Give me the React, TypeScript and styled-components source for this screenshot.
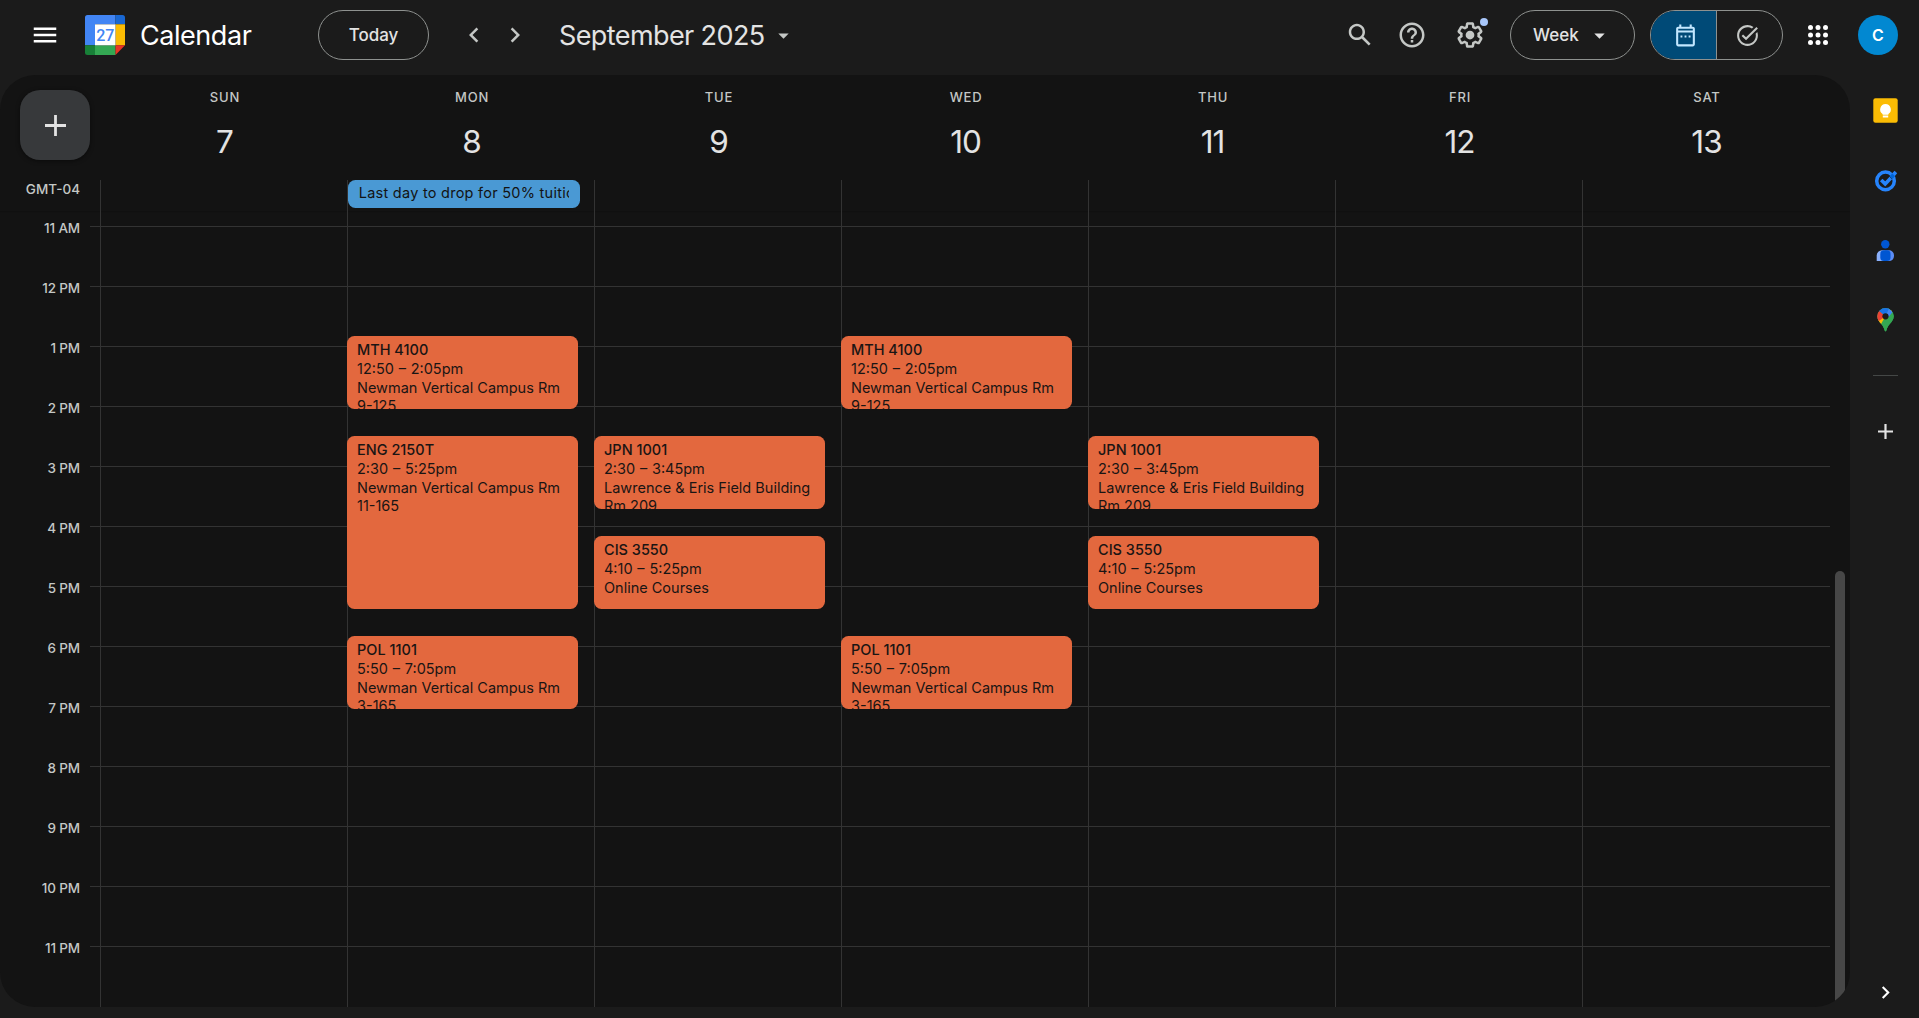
import React from 'react';
import styled, { createGlobalStyle, css } from 'styled-components';

const GlobalStyle = createGlobalStyle`
  *, *::before, *::after { box-sizing: border-box; }
  body {
    margin: 0;
    background: #1b1b1b;
    color: #e3e3e3;
    font-family: Inter, Roboto, "Liberation Sans", sans-serif;
    overflow: hidden;
  }
  button { font: inherit; color: inherit; background: none; border: 0; padding: 0; }
  svg { display: block; flex: none; }
`;

/* ---------- shell ---------- */

const Page = styled.div`
  display: flex;
  flex-direction: column;
  width: 100vw;
  height: 100vh;
  background: #1b1b1b;
`;

const Header = styled.header`
  display: flex;
  align-items: center;
  height: 70px;
  margin-bottom: 5px;
  padding: 0 21px 0 30px;
`;

const Main = styled.div`
  display: flex;
  flex: 1;
  min-height: 0;
  padding-bottom: 11px;
`;

/* ---------- header ---------- */

const IconButton = styled.button<{ $gap?: number }>`
  position: relative;
  display: flex;
  align-items: center;
  justify-content: center;
  width: 30px;
  height: 30px;
  margin-left: ${p => p.$gap ?? 0}px;
  color: #c4c7c5;
`;

const LogoSlot = styled.div`
  margin-left: 25px;
`;

const Brand = styled.span`
  width: 178px;
  margin-left: 15px;
  padding-top: 1px;
  font-size: 27px;
  line-height: 34px;
  letter-spacing: -0.45px;
  color: #fff;
`;

const Pill = styled.button<{ $width: number }>`
  display: flex;
  align-items: center;
  justify-content: center;
  width: ${p => p.$width}px;
  height: 50px;
  border: 1px solid #8e918f;
  border-radius: 25px;
  font-size: 17px;
  font-weight: 500;
  line-height: 24px;
`;

const ViewPill = styled(Pill)`
  margin-left: 25px;
  justify-content: flex-start;
  gap: 8px;
  padding-left: 22px;
`;

const MonthTitle = styled.h1`
  margin: 0 0 0 29px;
  padding-top: 1px;
  width: 212px;
  font-size: 27px;
  font-weight: 400;
  line-height: 34px;
  letter-spacing: -0.6px;
  white-space: nowrap;
`;

const Spacer = styled.div`
  flex: 1;
`;

const Badge = styled.span`
  position: absolute;
  top: -2px;
  right: -3px;
  width: 8px;
  height: 8px;
  border-radius: 50%;
  background: #a8c7fa;
`;

const Segmented = styled.div`
  display: flex;
  width: 133px;
  height: 50px;
  margin-left: 15px;
  border: 1px solid #8e918f;
  border-radius: 25px;
  overflow: hidden;
`;

const Segment = styled.button<{ $active?: boolean }>`
  display: flex;
  flex: 1;
  align-items: center;
  justify-content: center;
  padding-right: 5px;
  color: #c4c7c5;
  ${p =>
    p.$active &&
    css`
      flex: 0 0 66px;
      padding: 0 0 0 3px;
      border-right: 1px solid #8e918f;
      background: #004a77;
      color: #c2e7ff;
    `}
`;

const Avatar = styled.div`
  display: flex;
  align-items: center;
  justify-content: center;
  width: 40px;
  height: 40px;
  margin-left: 25px;
  border-radius: 50%;
  background: #0288d1;
  color: #fff;
  font-size: 16px;
  font-weight: 600;
`;

/* ---------- calendar panel ---------- */

const Panel = styled.main`
  display: flex;
  flex-direction: column;
  width: 1850px;
  border-radius: 35px;
  background: #131313;
  overflow: hidden;
`;

const DayHeader = styled.div`
  display: grid;
  grid-template-columns: 100px repeat(7, 247px);
  height: 105px;
`;

const CreateButton = styled.button`
  display: flex;
  align-items: center;
  justify-content: center;
  width: 70px;
  height: 70px;
  margin: 15px 0 0 20px;
  border-radius: 20px;
  background: #37393b;
  box-shadow: 0 1px 4px rgba(0, 0, 0, 0.5);
`;

const DayHead = styled.div`
  display: flex;
  flex-direction: column;
  align-items: center;
  padding: 12px 0 0 2px;
`;

const DayName = styled.span`
  padding-left: 1px;
  font-size: 13px;
  font-weight: 550;
  line-height: 20px;
  letter-spacing: 0.8px;
  color: #c4c7c5;
`;

const DayNumber = styled.span`
  margin-top: 14px;
  font-size: 31.5px;
  line-height: 41px;
  letter-spacing: -1px;
`;

const AllDayRow = styled.div`
  display: grid;
  grid-template-columns: 100px repeat(7, 247px);
  height: 31px;
  box-shadow: 0 1px 1px rgba(0, 0, 0, 0.15);
`;

const ZoneLabel = styled.span`
  width: 80px;
  font-size: 13.5px;
  font-weight: 550;
  line-height: 19px;
  text-align: right;
  color: #c4c7c5;
`;

const AllDayCell = styled.div`
  border-left: 1px solid #333;
`;

const AllDayEvent = styled.div`
  width: 232px;
  height: 28px;
  padding: 0 11px 0 10px;
  border-radius: 7.5px;
  background: #4a99d4;
  color: #131313;
  font-size: 14.5px;
  line-height: 26px;
  letter-spacing: 0.26px;
`;

const ClippedText = styled.div`
  padding-left: 0.7px;
  overflow: hidden;
  white-space: nowrap;
`;

const Body = styled.div`
  display: grid;
  grid-template: 100% / 1830px 20px;
  flex: 1;
  min-height: 0;
`;

const HourLayer = styled.div`
  grid-area: 1 / 1;
  display: flex;
  flex-direction: column;
  padding-top: 15px;
  overflow: hidden;
`;

const HourRow = styled.div`
  display: flex;
  flex: 0 0 60px;
  gap: 10px;
`;

const HourLabel = styled.span`
  width: 80px;
  height: 20px;
  margin-top: -8px;
  font-size: 13.5px;
  font-weight: 550;
  line-height: 20px;
  letter-spacing: -0.15px;
  text-align: right;
  color: #c4c7c5;
`;

const HourLine = styled.div`
  flex: 1;
  border-top: 1px solid #333;
`;

const DayLayer = styled.div`
  grid-area: 1 / 1;
  display: grid;
  grid-template: 100% / repeat(7, 247px);
  padding-left: 100px;
`;

/* One grid row per minute; the visible range starts at 10:45. */
const DayColumn = styled.div`
  display: grid;
  grid-auto-rows: 1px;
  align-content: start;
  border-left: 1px solid #333;
`;

const FIRST_MINUTE = 10 * 60 + 45;

const EventCard = styled.article<{ $start: number; $end: number }>`
  grid-row: ${p => p.$start - FIRST_MINUTE + 1} / span ${p => p.$end - p.$start - 2};
  width: 231px;
  margin-left: -1px;
  padding: 4px 4px 0 10px;
  border-radius: 7.5px;
  background: #e3683e;
  color: #1a1514;
  font-size: 14.5px;
  overflow: hidden;
`;

const EventTitle = styled.div`
  font-weight: 500;
  line-height: 19.4px;
`;

const EventTime = styled.div`
  line-height: 19.4px;
  word-spacing: 0.7px;
`;

const EventPlace = styled.div`
  line-height: 18px;
`;

const ScrollTrack = styled.div`
  grid-area: 1 / 2;
  padding: 360px 5px 0;
`;

const ScrollThumb = styled.div`
  height: 100%;
  border-radius: 5px 5px 0 0;
  background: #474747;
`;

/* ---------- side rail ---------- */

const Rail = styled.aside`
  display: flex;
  flex: 1;
  flex-direction: column;
  align-items: center;
  padding: 20px 0 2px 2px;
`;

const RailItem = styled.button`
  display: flex;
  align-items: center;
  justify-content: center;
  width: 50px;
  height: 30px;
  margin-bottom: 40px;
`;

const RailDivider = styled.div`
  width: 25px;
  height: 1px;
  margin: 0 0 40px;
  background: #444746;
`;

const RailCollapse = styled.button`
  margin-top: auto;
`;

/* ---------- icons ---------- */

type GlyphProps = { d: string; size?: number; color?: string };

const Glyph = ({ d, size = 30, color = 'currentColor' }: GlyphProps) => (
  <svg width={size} height={size} viewBox="0 0 24 24" fill={color} aria-hidden>
    <path d={d} />
  </svg>
);

const paths = {
  menu: 'M3 18h18v-2H3v2zm0-5h18v-2H3v2zm0-7v2h18V6H3z',
  prev: 'M15.41 7.41 14 6l-6 6 6 6 1.41-1.41L10.83 12z',
  next: 'M10 6 8.59 7.41 13.17 12l-4.58 4.59L10 18l6-6z',
  drop: 'M7 10l5 5 5-5z',
  search:
    'M20.49 19l-5.73-5.73C15.53 12.2 16 10.91 16 9.5 16 5.91 13.09 3 9.5 3S3 5.91 3 9.5 5.91 16 9.5 16c1.41 0 2.7-.47 3.77-1.24L19 20.49 20.49 19zM5 9.5C5 7.01 7.01 5 9.5 5S14 7.01 14 9.5 11.99 14 9.5 14 5 11.99 5 9.5z',
  help:
    'M11 18h2v-2h-2v2zm1-16C6.48 2 2 6.48 2 12s4.48 10 10 10 10-4.48 10-10S17.52 2 12 2zm0 18c-4.41 0-8-3.59-8-8s3.59-8 8-8 8 3.59 8 8-3.59 8-8 8zm0-14c-2.21 0-4 1.79-4 4h2c0-1.1.9-2 2-2s2 .9 2 2c0 2-3 1.75-3 5h2c0-2.25 3-2.5 3-5 0-2.21-1.79-4-4-4z',
  gear:
    'M13.85 22.25h-3.7c-.74 0-1.36-.54-1.45-1.27l-.27-1.89c-.27-.14-.53-.29-.79-.46l-1.8.72c-.7.26-1.47-.03-1.81-.65L2.2 15.53c-.35-.66-.2-1.44.36-1.88l1.53-1.19c-.01-.15-.02-.3-.02-.46 0-.15.01-.31.02-.46l-1.52-1.19c-.59-.45-.74-1.26-.37-1.88l1.85-3.19c.34-.62 1.11-.9 1.79-.63l1.81.73c.26-.17.52-.32.78-.46l.27-1.91c.09-.7.71-1.25 1.44-1.25h3.7c.74 0 1.36.54 1.45 1.27l.27 1.89c.27.14.53.29.79.46l1.8-.72c.71-.26 1.48.03 1.82.65l1.84 3.18c.36.66.2 1.44-.36 1.88l-1.52 1.19c.01.15.02.3.02.46s-.01.31-.02.46l1.52 1.19c.56.45.72 1.23.37 1.86l-1.86 3.22c-.34.62-1.11.9-1.8.63l-1.8-.72c-.26.17-.52.32-.78.46l-.27 1.91c-.1.68-.72 1.22-1.46 1.22zm-3.23-2h2.76l.37-2.55.53-.22c.44-.18.88-.44 1.34-.78l.45-.34 2.38.96 1.38-2.4-2.03-1.58.07-.56c.03-.26.06-.51.06-.78s-.03-.53-.06-.78l-.07-.56 2.03-1.58-1.39-2.4-2.39.96-.45-.35c-.42-.32-.87-.58-1.33-.77l-.52-.22-.37-2.55h-2.76l-.37 2.55-.53.21c-.44.19-.88.44-1.34.79l-.45.33-2.38-.95-1.39 2.39 2.03 1.58-.07.56a7 7 0 0 0-.06.79c0 .26.02.53.06.78l.07.56-2.03 1.58 1.38 2.4 2.39-.96.45.35c.43.33.86.58 1.33.77l.53.22.38 2.55zM12 15.5a3.5 3.5 0 1 0 0-7 3.5 3.5 0 0 0 0 7z',
  taskAlt:
    'M22 5.18 10.59 16.6l-4.24-4.24 1.41-1.41 2.83 2.83 10-10L22 5.18zm-2.21 5.04c.13.57.21 1.17.21 1.78 0 4.42-3.58 8-8 8s-8-3.58-8-8 3.58-8 8-8c1.58 0 3.04.46 4.28 1.25l1.44-1.44A9.9 9.9 0 0 0 12 2C6.48 2 2 6.48 2 12s4.48 10 10 10 10-4.48 10-10c0-1.19-.22-2.33-.6-3.39l-1.61 1.61z',
};

const CalendarLogo = () => (
  <svg width="40" height="40" viewBox="0 0 40 40" role="img" aria-label="Calendar">
    <path d="M2.5 0H30.5V9.3H10V30.3H0V2.5A2.5 2.5 0 0 1 2.5 0z" fill="#4285f4" />
    <path d="M30.5 0h7A2.5 2.5 0 0 1 40 2.5v6.8h-9.5z" fill="#1967d2" />
    <path d="M30.5 9.3H40v21h-9.5z" fill="#fbbc04" />
    <path d="M10 30.3h20.5V40H10z" fill="#34a853" />
    <path d="M0 30.3h10V40H2.5A2.5 2.5 0 0 1 0 37.5z" fill="#188038" />
    <path d="M30.5 30.3H40L30.5 40z" fill="#ea3325" />
    <path d="M10 9.3h20.5v21H10z" fill="#fff" />
    <text x="20.3" y="25.9" textAnchor="middle" fontFamily="Roboto" fontSize="16" fontWeight="500" fill="#4285f4">
      27
    </text>
  </svg>
);

const CalendarGlyph = () => (
  <svg width="25" height="25" viewBox="0 0 24 24" aria-hidden>
    <path
      fill="currentColor"
      fillRule="evenodd"
      d="M6 1.5h2v2h8v-2h2v2h1c1.1 0 2 .9 2 2v15c0 1.1-.9 2-2 2H5c-1.1 0-2-.9-2-2v-15c0-1.1.9-2 2-2h1v-2zM5 5.5v1.6h14V5.5H5zm0 3.6v11.4h14V9.1H5z"
    />
    <path fill="currentColor" d="M7.2 12h1.8v1.8H7.2zM11.1 12h1.8v1.8h-1.8zM15 12h1.8v1.8H15z" />
  </svg>
);

const AppsGlyph = () => (
  <svg width="30" height="30" viewBox="0 0 24 24" fill="#fff" aria-hidden>
    {[6, 12, 18].map(y => [6, 12, 18].map(x => <circle key={`${x}-${y}`} cx={x} cy={y} r="2" />))}
  </svg>
);

const PlusGlyph = ({ size, stroke }: { size: number; stroke: number }) => (
  <svg width={size} height={size} viewBox={`0 0 ${size} ${size}`} stroke="currentColor" strokeWidth={stroke} aria-hidden>
    <path d={`M${size / 2} 0V${size}M0 ${size / 2}H${size}`} />
  </svg>
);

const KeepIcon = () => (
  <svg width="25" height="25" viewBox="0 0 25 25" aria-hidden>
    <rect x=".3" y=".3" width="24.4" height="24.4" rx="2.2" fill="#fbbc04" />
    <path
      d="M12.5 6a5.4 5.4 0 0 0-2.9 9.9v.9h5.8v-.9A5.4 5.4 0 0 0 12.5 6zM9.8 17.6h5.4v1.8H9.8z"
      fill="#fff"
    />
  </svg>
);

const TasksIcon = () => (
  <svg width="25" height="25" viewBox="0 0 25 25" fill="none" aria-hidden>
    <circle cx="12.5" cy="12.9" r="8.8" stroke="#2684fc" strokeWidth="3.5" />
    <path d="M8.2 12l4 3.9 5.6-5.8" stroke="#2684fc" strokeWidth="3.6" />
    <path d="M16.6 8.6l2.8-3.6 2.9 2.7-2.8 3.2z" fill="#0066da" />
    <path d="M19.2 5.2l2.4-2.4 2.6 2.5-2.4 2.6z" fill="#2684fc" />
  </svg>
);

const ContactsIcon = () => (
  <svg width="25" height="25" viewBox="0 0 25 25" aria-hidden>
    <circle cx="12.3" cy="6.3" r="4.2" fill="#0056d2" />
    <path d="M9 12.3h3v10.8H3.7v-5.5A5.3 5.3 0 0 1 9 12.3z" fill="#8ab0fb" />
    <path d="M12 12.3h4a5 5 0 0 1 5 5v.8a5 5 0 0 1-5 5h-4z" fill="#5c8df6" />
    <rect x="7.3" y="12.3" width="10.2" height="10.8" rx="3.6" fill="#0056d2" />
  </svg>
);

const MapsIcon = () => (
  <svg width="17" height="24" viewBox="0 0 17 24" aria-hidden>
    <defs>
      <clipPath id="pin">
        <path d="M8.5 0A8.3 8.3 0 0 0 .2 8.3c0 3.2 1.9 5.2 4 7.7 1.9 2.2 2.8 4.2 3.3 6 .2.8.5 1.3 1 1.3s.8-.5 1-1.3c.5-1.8 1.4-3.8 3.3-6 2.1-2.5 4-4.5 4-7.7A8.3 8.3 0 0 0 8.5 0z" />
      </clipPath>
    </defs>
    <g clipPath="url(#pin)">
      <path d="M0 0h17v24H0z" fill="#34a853" />
      <path d="M8.5 8.3L17 -1.5V1.5L3.8 17 -1 12.5z" fill="#fbbc04" />
      <path d="M8.5 8.3L2.2 2.4-3 8l3.5 6z" fill="#ea4335" />
      <path d="M8.5 8.3L1.5 2.4 3-1h10z" fill="#1a73e8" />
      <path d="M8.5 8.3L15.6 4.2 17 7l-1 17H8L4.2 15.8z" fill="#34a853" />
      <path d="M8.5 8.3L12 .5l3.6 3.5-4 5z" fill="#4285f4" />
    </g>
    <circle cx="8.5" cy="8.3" r="3.1" fill="#1b1b1b" />
  </svg>
);

/* ---------- data ---------- */

type CalEvent = { title: string; time: string; place: string; start: number; end: number };

const at = (hour: number, minute: number) => hour * 60 + minute;

const mth: CalEvent = {
  title: 'MTH 4100',
  time: '12:50 – 2:05pm',
  place: 'Newman Vertical Campus Rm 9-125',
  start: at(12, 50),
  end: at(14, 5),
};
const eng: CalEvent = {
  title: 'ENG 2150T',
  time: '2:30 – 5:25pm',
  place: 'Newman Vertical Campus Rm 11-165',
  start: at(14, 30),
  end: at(17, 25),
};
const pol: CalEvent = {
  title: 'POL 1101',
  time: '5:50 – 7:05pm',
  place: 'Newman Vertical Campus Rm 3-165',
  start: at(17, 50),
  end: at(19, 5),
};
const jpn: CalEvent = {
  title: 'JPN 1001',
  time: '2:30 – 3:45pm',
  place: 'Lawrence & Eris Field Building Rm 209',
  start: at(14, 30),
  end: at(15, 45),
};
const cis: CalEvent = {
  title: 'CIS 3550',
  time: '4:10 – 5:25pm',
  place: 'Online Courses',
  start: at(16, 10),
  end: at(17, 25),
};

const days: { name: string; date: number; allDay?: string; events: CalEvent[] }[] = [
  { name: 'SUN', date: 7, events: [] },
  { name: 'MON', date: 8, allDay: 'Last day to drop for 50% tuition', events: [mth, eng, pol] },
  { name: 'TUE', date: 9, events: [jpn, cis] },
  { name: 'WED', date: 10, events: [mth, pol] },
  { name: 'THU', date: 11, events: [jpn, cis] },
  { name: 'FRI', date: 12, events: [] },
  { name: 'SAT', date: 13, events: [] },
];

const hours = [
  '11 AM', '12 PM', '1 PM', '2 PM', '3 PM', '4 PM', '5 PM',
  '6 PM', '7 PM', '8 PM', '9 PM', '10 PM', '11 PM',
];

/* ---------- app ---------- */

export default function App() {
  return (
    <>
      <GlobalStyle />
      <Page>
        <Header>
          <IconButton aria-label="Main menu"><Glyph d={paths.menu} color="#fff" /></IconButton>
          <LogoSlot><CalendarLogo /></LogoSlot>
          <Brand>Calendar</Brand>
          <Pill $width={111}>Today</Pill>
          <IconButton $gap={30} aria-label="Previous week"><Glyph d={paths.prev} /></IconButton>
          <IconButton $gap={11} aria-label="Next week"><Glyph d={paths.next} /></IconButton>
          <MonthTitle>September 2025</MonthTitle>
          <Glyph d={paths.drop} size={25} color="#c4c7c5" />
          <Spacer />
          <IconButton aria-label="Search"><Glyph d={paths.search} /></IconButton>
          <IconButton $gap={22} aria-label="Support"><Glyph d={paths.help} /></IconButton>
          <IconButton $gap={28} aria-label="Settings">
            <Glyph d={paths.gear} />
            <Badge />
          </IconButton>
          <ViewPill $width={125}>
            Week
            <Glyph d={paths.drop} size={25} />
          </ViewPill>
          <Segmented>
            <Segment $active aria-label="Calendar view"><CalendarGlyph /></Segment>
            <Segment aria-label="Tasks view"><Glyph d={paths.taskAlt} size={25} /></Segment>
          </Segmented>
          <IconButton $gap={20} aria-label="Apps"><AppsGlyph /></IconButton>
          <Avatar>C</Avatar>
        </Header>

        <Main>
          <Panel>
            <DayHeader>
              <CreateButton aria-label="Create"><PlusGlyph size={21} stroke={2.8} /></CreateButton>
              {days.map(day => (
                <DayHead key={day.name}>
                  <DayName>{day.name}</DayName>
                  <DayNumber>{day.date}</DayNumber>
                </DayHead>
              ))}
            </DayHeader>

            <AllDayRow>
              <ZoneLabel>GMT-04</ZoneLabel>
              {days.map(day => (
                <AllDayCell key={day.name}>
                  {day.allDay && (
                    <AllDayEvent><ClippedText>{day.allDay}</ClippedText></AllDayEvent>
                  )}
                </AllDayCell>
              ))}
            </AllDayRow>

            <Body>
              <HourLayer>
                {hours.map(hour => (
                  <HourRow key={hour}>
                    <HourLabel>{hour}</HourLabel>
                    <HourLine />
                  </HourRow>
                ))}
              </HourLayer>
              <DayLayer>
                {days.map(day => (
                  <DayColumn key={day.name}>
                    {day.events.map(event => (
                      <EventCard key={event.title} $start={event.start} $end={event.end}>
                        <EventTitle>{event.title}</EventTitle>
                        <EventTime>{event.time}</EventTime>
                        <EventPlace>{event.place}</EventPlace>
                      </EventCard>
                    ))}
                  </DayColumn>
                ))}
              </DayLayer>
              <ScrollTrack><ScrollThumb /></ScrollTrack>
            </Body>
          </Panel>

          <Rail>
            <RailItem aria-label="Keep"><KeepIcon /></RailItem>
            <RailItem aria-label="Tasks"><TasksIcon /></RailItem>
            <RailItem aria-label="Contacts"><ContactsIcon /></RailItem>
            <RailItem aria-label="Maps"><MapsIcon /></RailItem>
            <RailDivider />
            <RailItem aria-label="Get add-ons"><PlusGlyph size={15} stroke={2.2} /></RailItem>
            <RailCollapse aria-label="Hide side panel"><Glyph d={paths.next} size={25} color="#fff" /></RailCollapse>
          </Rail>
        </Main>
      </Page>
    </>
  );
}
